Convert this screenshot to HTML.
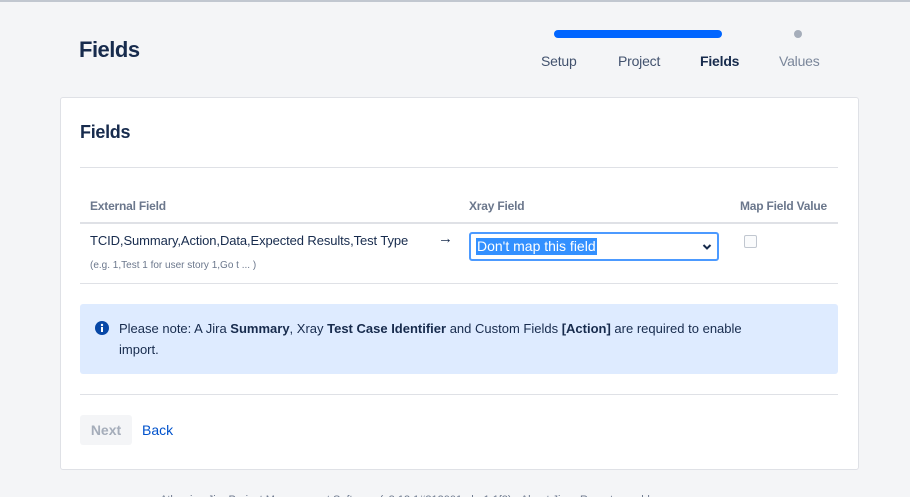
<!DOCTYPE html>
<html><head><meta charset="utf-8"><style>
*{box-sizing:border-box;margin:0;padding:0}
html,body{width:910px;height:497px;overflow:hidden}
body{background:#f4f5f7;font-family:"Liberation Sans",sans-serif;color:#172b4d;position:relative}
.a{position:absolute}
.t{font-size:22px;font-weight:600;left:79px;top:37px;letter-spacing:-0.5px}
.bar{left:554px;top:30px;width:168px;height:8px;background:#0065ff;border-radius:4px}
.dot{left:794px;top:30px;width:8px;height:8px;border-radius:50%;background:#a5adba}
.st{top:53px;font-size:14px;color:#42526e;letter-spacing:-0.2px}
.card{left:60px;top:97px;width:799px;height:373px;background:#fff;border:1px solid #dfe1e6;border-radius:3px}
.h{left:80px;top:122px;font-size:18px;font-weight:600;letter-spacing:-0.3px}
.ln{left:80px;width:758px;height:1px;background:#dfe1e6}
.th{top:199px;font-size:12px;font-weight:bold;color:#6b778c;letter-spacing:-0.2px}
.sel{left:469px;top:232px;width:250px;height:29px;border:2px solid #4c9aff;border-radius:3px;background:#fff}
.sel span{position:absolute;left:5px;top:4px;background:#3390ff;color:#fff;font-size:14px;line-height:17px;padding:0 1px}
.info{left:80px;top:304px;width:758px;height:70px;background:#deebff;border-radius:3px}
</style></head><body>
<div class="a" style="left:0;top:0;width:910px;height:2px;background:#c1c7d0"></div>
<div class="a t">Fields</div>
<div class="a bar"></div><div class="a dot"></div>
<div class="a st" style="left:541px">Setup</div>
<div class="a st" style="left:618px">Project</div>
<div class="a st" style="left:700px;font-weight:bold;color:#172b4d">Fields</div>
<div class="a st" style="left:779px;color:#7a869a">Values</div>
<div class="a card"></div>
<div class="a h">Fields</div>
<div class="a ln" style="top:167px"></div>
<div class="a th" style="left:90px">External Field</div>
<div class="a th" style="left:469px">Xray Field</div>
<div class="a th" style="left:740px">Map Field Value</div>
<div class="a ln" style="top:222px;height:2px"></div>
<div class="a" style="left:90px;top:233px;font-size:13px;letter-spacing:-0.1px">TCID,Summary,Action,Data,Expected Results,Test Type</div>
<div class="a" style="left:90px;top:260px;font-size:10px;color:#6b778c">(e.g. 1,Test 1 for user story 1,Go t ... )</div>
<div class="a" style="left:438px;top:230px;font-size:15px">→</div>
<div class="a sel"><span>Don't map this field</span>
<svg class="a" style="left:231px;top:9px" width="10" height="8" viewBox="0 0 10 8"><path d="M1.5 2 L5 5.5 L8.5 2" stroke="#172b4d" stroke-width="2" fill="none"/></svg></div>
<div class="a" style="left:744px;top:235px;width:13px;height:13px;border:1px solid #c1c7d0;border-radius:2px;background:#fafbfc"></div>
<div class="a ln" style="top:283px"></div>
<div class="a info"></div>
<svg class="a" style="left:95px;top:321px" width="14" height="14" viewBox="0 0 14 14"><circle cx="7" cy="7" r="7" fill="#0747a6"/><rect x="6" y="6" width="2" height="5" fill="#fff"/><circle cx="7" cy="4" r="1.2" fill="#fff"/></svg>
<div class="a" style="left:119px;top:318px;width:665px;font-size:13px;line-height:21px;color:#172b4d">Please note: A Jira <b>Summary</b>, Xray <b>Test Case Identifier</b> and Custom Fields <b>[Action]</b> are required to enable import.</div>
<div class="a ln" style="top:394px"></div>
<div class="a" style="left:80px;top:415px;width:52px;height:30px;background:#f4f5f7;border-radius:3px;color:#a5adba;font-size:14px;font-weight:bold;text-align:center;line-height:30px">Next</div>
<div class="a" style="left:142px;top:422px;font-size:14px;color:#0052cc">Back</div>
<div class="a" style="left:160px;top:494px;font-size:11px;color:#6b778c;white-space:nowrap">Atlassian Jira Project Management Software (v8.13.1#813001-sha1:1f8) · About Jira · Report a problem</div>
</body></html>
